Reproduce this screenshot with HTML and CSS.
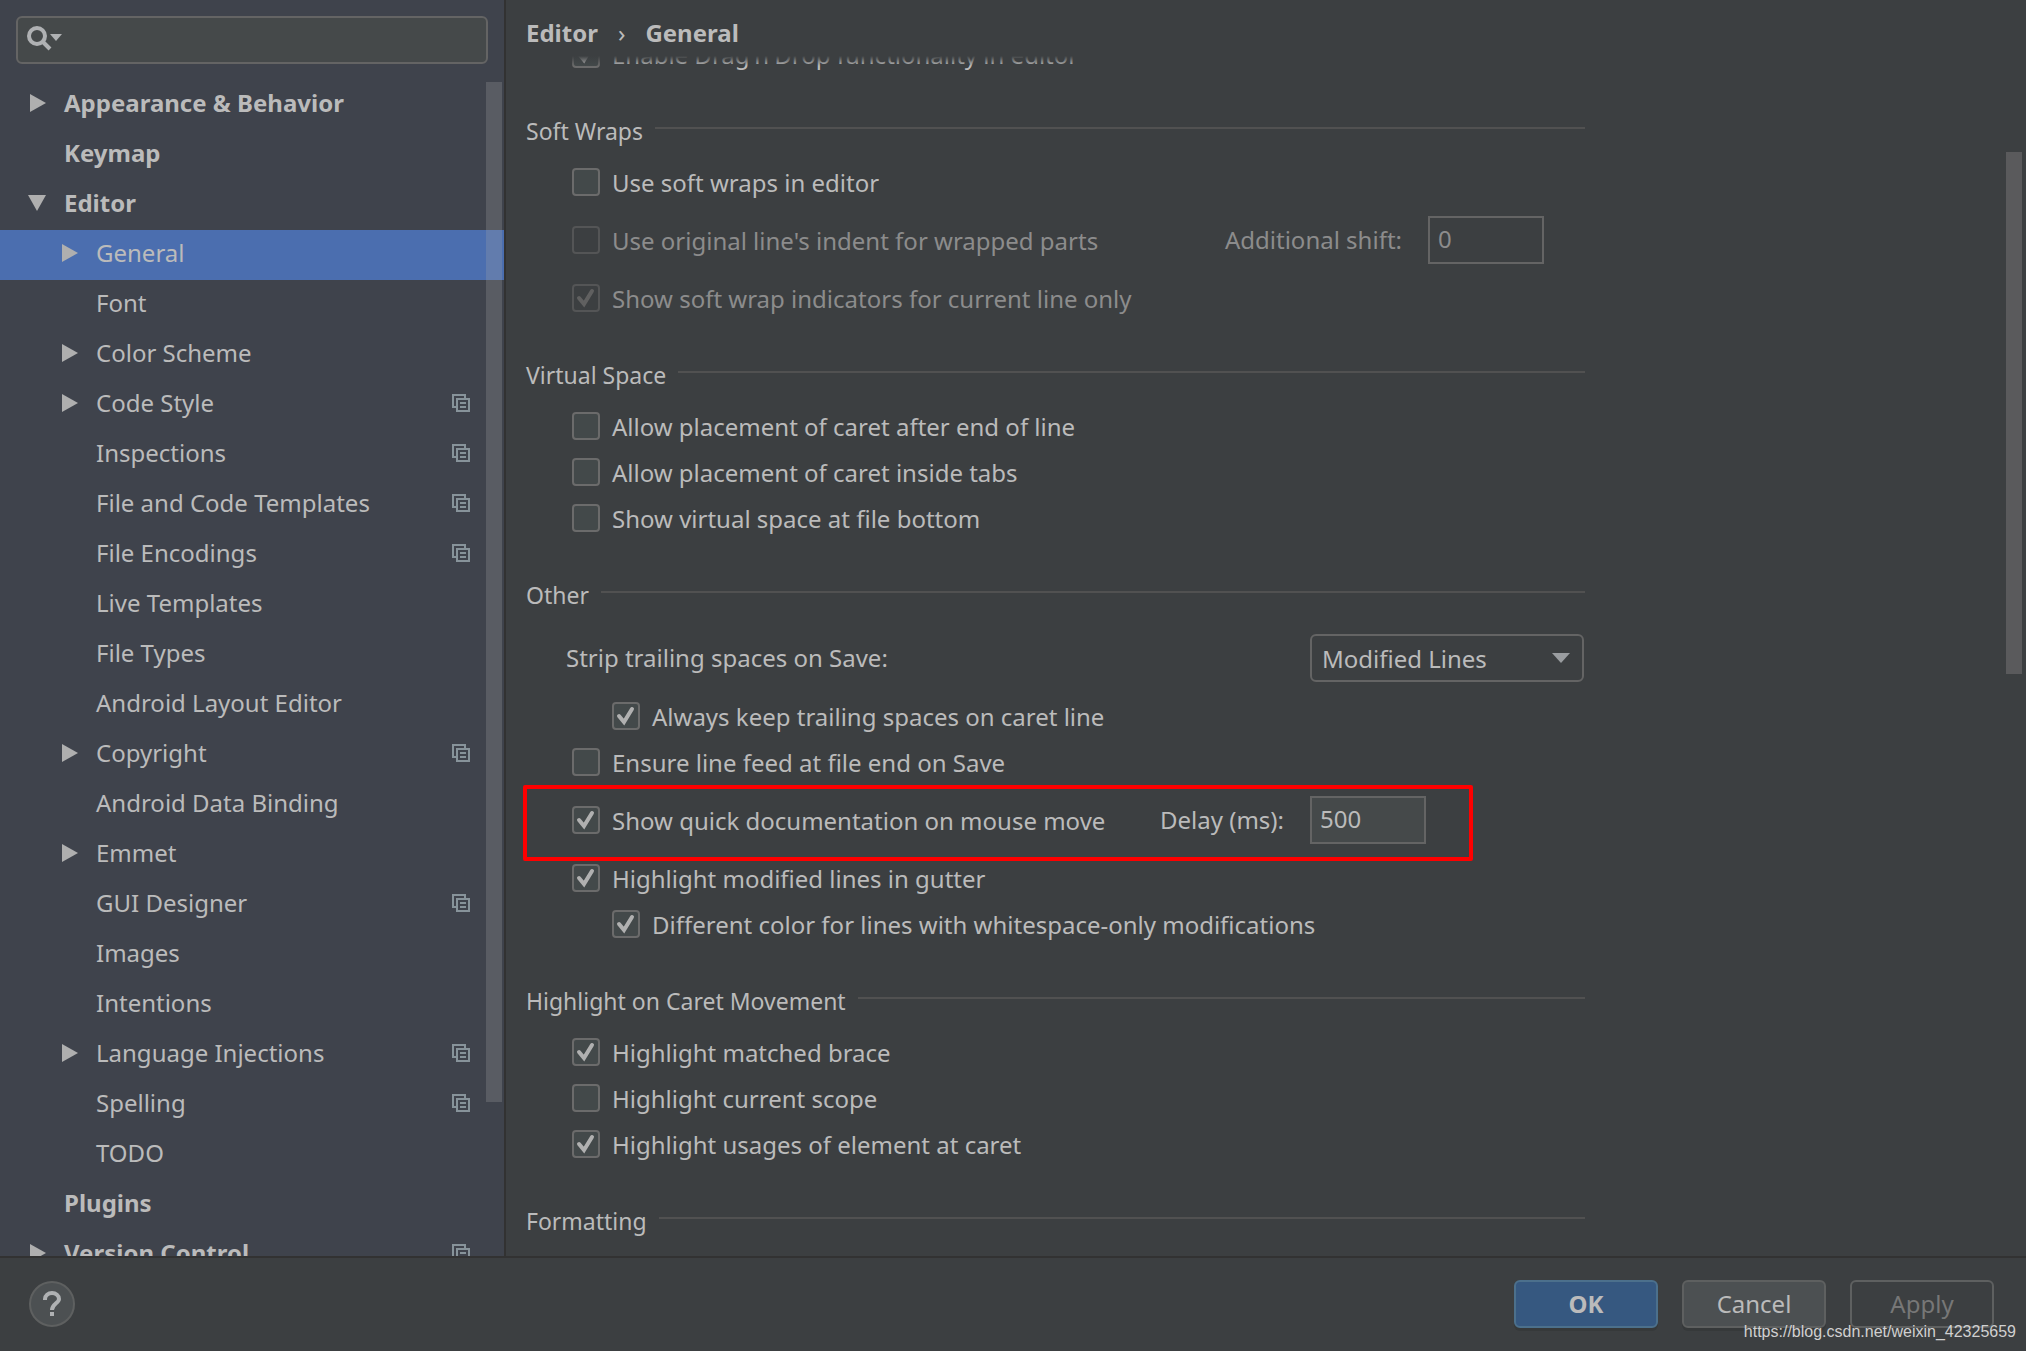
FILE: index.html
```
<!DOCTYPE html>
<html lang="en">

<head>
    <meta charset="UTF-8">
    <meta name="viewport" content="width=device-width, initial-scale=1.0">
    <title>Settings</title>
    <link rel="stylesheet" href="styles.css">
</head>

<body>
    <svg class="sprite" aria-hidden="true">
        <symbol id="right" viewBox="0 0 16 18">
            <path d="M0 0L16 9L0 18Z" fill="#afafaf" />
        </symbol>
        <symbol id="down" viewBox="0 0 18 16">
            <path d="M0 0H18L9 16Z" fill="#afafaf" />
        </symbol>
        <symbol id="copy" viewBox="0 0 18 18">
            <path d="M0 0H14V4H12V2H2V12H4V14H0Z" fill="#87939a" />
            <path d="M4 4H18V18H4ZM6 6V16H16V6Z" fill="#87939a" fill-rule="evenodd" />
            <path d="M8 8H14V10H8ZM8 12H14V14H8Z" fill="#87939a" />
        </symbol>
    </svg>
    <div class="window">
        <aside class="sidebar">
            <div class="search">
                <svg width="36" height="26" viewBox="0 0 36 26">
                    <circle cx="10" cy="10" r="8" fill="none" stroke="#afb1b3" stroke-width="4" />
                    <path d="M15 15L23 23" stroke="#afb1b3" stroke-width="4" />
                    <path d="M23 8H35L29 15Z" fill="#afb1b3" />
                </svg>
                <input type="text" aria-label="Search settings">
            </div>
            <nav class="tree">
                <ul>
                    <li class="top"><a href="#"><svg class="arrow"><use href="#right" /></svg>Appearance &amp; Behavior</a></li>
                    <li class="top"><a href="#"><span class="arrow"></span>Keymap</a></li>
                    <li class="top"><a href="#"><svg class="arrow open"><use href="#down" /></svg>Editor</a></li>
                    <li class="selected"><a href="#"><svg class="arrow"><use href="#right" /></svg>General</a></li>
                    <li><a href="#"><span class="arrow"></span>Font</a></li>
                    <li><a href="#"><svg class="arrow"><use href="#right" /></svg>Color Scheme</a></li>
                    <li><a href="#"><svg class="arrow"><use href="#right" /></svg>Code Style<svg class="copy"><use href="#copy" /></svg></a></li>
                    <li><a href="#"><span class="arrow"></span>Inspections<svg class="copy"><use href="#copy" /></svg></a></li>
                    <li><a href="#"><span class="arrow"></span>File and Code Templates<svg class="copy"><use href="#copy" /></svg></a></li>
                    <li><a href="#"><span class="arrow"></span>File Encodings<svg class="copy"><use href="#copy" /></svg></a></li>
                    <li><a href="#"><span class="arrow"></span>Live Templates</a></li>
                    <li><a href="#"><span class="arrow"></span>File Types</a></li>
                    <li><a href="#"><span class="arrow"></span>Android Layout Editor</a></li>
                    <li><a href="#"><svg class="arrow"><use href="#right" /></svg>Copyright<svg class="copy"><use href="#copy" /></svg></a></li>
                    <li><a href="#"><span class="arrow"></span>Android Data Binding</a></li>
                    <li><a href="#"><svg class="arrow"><use href="#right" /></svg>Emmet</a></li>
                    <li><a href="#"><span class="arrow"></span>GUI Designer<svg class="copy"><use href="#copy" /></svg></a></li>
                    <li><a href="#"><span class="arrow"></span>Images</a></li>
                    <li><a href="#"><span class="arrow"></span>Intentions</a></li>
                    <li><a href="#"><svg class="arrow"><use href="#right" /></svg>Language Injections<svg class="copy"><use href="#copy" /></svg></a></li>
                    <li><a href="#"><span class="arrow"></span>Spelling<svg class="copy"><use href="#copy" /></svg></a></li>
                    <li><a href="#"><span class="arrow"></span>TODO</a></li>
                    <li class="top"><a href="#"><span class="arrow"></span>Plugins</a></li>
                    <li class="top"><a href="#"><svg class="arrow"><use href="#right" /></svg>Version Control<svg class="copy"><use href="#copy" /></svg></a></li>
                </ul>
                <div class="thumb"></div>
            </nav>
        </aside>
        <main class="content">
            <h1><span>Editor</span><span class="sep">›</span><span>General</span></h1>
            <div class="scroll">
                <div class="options">
                    <div class="row"><label><input type="checkbox" checked>Enable Drag'n'Drop functionality in editor</label></div>

                    <h2>Soft Wraps</h2>
                    <div class="row"><label><input type="checkbox">Use soft wraps in editor</label></div>
                    <div class="row tall">
                        <label><input type="checkbox" disabled>Use original line's indent for wrapped parts</label>
                        <label class="field shift disabled" for="shift">Additional shift:</label>
                        <input type="text" id="shift" value="0" disabled>
                    </div>
                    <div class="row"><label><input type="checkbox" checked disabled>Show soft wrap indicators for current line only</label></div>

                    <h2>Virtual Space</h2>
                    <div class="row"><label><input type="checkbox">Allow placement of caret after end of line</label></div>
                    <div class="row"><label><input type="checkbox">Allow placement of caret inside tabs</label></div>
                    <div class="row"><label><input type="checkbox">Show virtual space at file bottom</label></div>

                    <h2>Other</h2>
                    <div class="row tall strip">
                        <label class="field" for="strip">Strip trailing spaces on Save:</label>
                        <select id="strip">
                            <option>None</option>
                            <option selected>Modified Lines</option>
                            <option>All</option>
                        </select>
                    </div>
                    <div class="row nested"><label><input type="checkbox" checked>Always keep trailing spaces on caret line</label></div>
                    <div class="row"><label><input type="checkbox">Ensure line feed at file end on Save</label></div>
                    <div class="row tall marked">
                        <label><input type="checkbox" checked>Show quick documentation on mouse move</label>
                        <label class="field delay" for="delay">Delay (ms):</label>
                        <input type="text" id="delay" value="500">
                    </div>
                    <div class="row"><label><input type="checkbox" checked>Highlight modified lines in gutter</label></div>
                    <div class="row nested"><label><input type="checkbox" checked>Different color for lines with whitespace-only modifications</label></div>

                    <h2>Highlight on Caret Movement</h2>
                    <div class="row"><label><input type="checkbox" checked>Highlight matched brace</label></div>
                    <div class="row"><label><input type="checkbox">Highlight current scope</label></div>
                    <div class="row"><label><input type="checkbox" checked>Highlight usages of element at caret</label></div>

                    <h2>Formatting</h2>
                </div>
            </div>
            <div class="thumb"></div>
        </main>
        <footer class="footer">
            <button class="help" aria-label="Help">
                <svg width="18" height="26" viewBox="0 0 18 26">
                    <path d="M2 9V8A7 6 0 0 1 16 8C16 12 9 13 9 19" fill="none" stroke="#afb1b3" stroke-width="4" />
                    <path d="M7 21H11V25H7Z" fill="#afb1b3" />
                </svg>
            </button>
            <button class="ok">OK</button>
            <button class="cancel">Cancel</button>
            <button class="apply" disabled>Apply</button>
        </footer>
        <div class="watermark">https://blog.csdn.net/weixin_42325659</div>
    </div>
</body>

</html>
```
FILE: styles.css
```
*,
*::before,
*::after {
    box-sizing: border-box;
}

body {
    margin: 0;
    background-color: #3c3f41;
    color: #bbbbbb;
    font-family: "Noto Sans", "Open Sans", sans-serif;
    font-size: 24px;
}

input,
select,
button {
    font: inherit;
    color: inherit;
}

.sprite {
    position: absolute;
    width: 0;
    height: 0;
}

.window {
    position: relative;
    height: 100vh;
    display: grid;
    grid-template-columns: 506px 1fr;
    grid-template-rows: minmax(0, 1fr) 95px;
}

.thumb {
    position: absolute;
    width: 16px;
    background-color: #5a5a5c;
}

/* left tree */
.sidebar {
    background-color: #3f434c;
    border-right: 2px solid #323232;
    display: flex;
    flex-direction: column;
    min-height: 0;
}

.search {
    display: flex;
    align-items: center;
    height: 48px;
    margin: 16px;
    padding: 0 0 2px 9px;
    background-color: #45494a;
    border: 2px solid #646464;
    border-radius: 6px;
}

.search svg {
    flex: none;
}

.search input {
    flex: 1;
    min-width: 0;
    background: none;
    border: none;
    outline: none;
}

.tree {
    position: relative;
    flex: 1;
    min-height: 0;
    overflow: hidden;
}

.tree ul {
    list-style: none;
    margin: 0;
    padding: 0;
}

.tree a {
    display: flex;
    align-items: center;
    height: 50px;
    padding: 0 34px 6px 62px;
    color: inherit;
    text-decoration: none;
}

.tree .top a {
    padding-left: 30px;
    font-weight: bold;
}

.tree .selected {
    background-color: #4b6eaf;
}

.arrow {
    width: 16px;
    height: 18px;
    margin: 2px 18px 0 0;
}

.arrow.open {
    width: 18px;
    height: 16px;
    margin-left: -2px;
}

.copy {
    width: 18px;
    height: 18px;
    margin: 2px 0 0 auto;
}

.tree .thumb {
    top: 2px;
    right: 2px;
    height: 1020px;
    background-color: rgba(166, 166, 166, 0.25);
}

/* right panel */
.content {
    position: relative;
    display: flex;
    flex-direction: column;
    min-height: 0;
}

.content > .thumb {
    top: 152px;
    right: 4px;
    height: 522px;
}

h1 {
    display: flex;
    gap: 20px;
    margin: 0;
    padding: 10px 20px 0;
    height: 56px;
    line-height: 46px;
    font-size: 24px;
}

.sep {
    font-weight: normal;
}

.scroll {
    position: relative;
    flex: 1;
    min-height: 0;
    overflow: hidden;
}

.scroll::before {
    content: "";
    position: absolute;
    top: 0;
    left: 0;
    right: 0;
    height: 10px;
    background: linear-gradient(#3c3f41, rgba(60, 63, 65, 0));
}

.options {
    width: 1059px;
    margin: -25px 0 0 20px;
}

h2 {
    display: flex;
    align-items: center;
    gap: 12px;
    margin: 36px 0 10px;
    line-height: 36px;
    font-size: 23px;
    font-weight: normal;
}

h2::after {
    content: "";
    flex: 1;
    height: 2px;
    margin-bottom: 6px;
    background-color: #515151;
}

.row {
    display: flex;
    align-items: center;
    height: 46px;
    padding-left: 46px;
}

.row.nested {
    padding-left: 86px;
}

.row.strip {
    justify-content: space-between;
    padding-left: 40px;
}

.row.tall {
    height: 70px;
}

.row label {
    display: flex;
    align-items: center;
    white-space: nowrap;
}

.row label:has(:disabled),
.row .disabled {
    color: #8c8c8c;
}

.row .field {
    margin-right: 26px;
    padding-bottom: 2px;
}

.row .shift,
.row .delay {
    margin-left: auto;
}

.row .shift + input {
    margin-right: 41px;
}

.row .delay + input {
    margin-right: 159px;
}

input[type="checkbox"] {
    appearance: none;
    width: 28px;
    height: 28px;
    margin: 0 12px 0 0;
    background: #43494a center no-repeat;
    border: 2px solid #6b6b6b;
    border-radius: 4px;
}

input[type="checkbox"]:checked {
    background-image: url("data:image/svg+xml,%3Csvg xmlns='http://www.w3.org/2000/svg' width='24' height='24'%3E%3Cpath d='M5 12L10 18L18 5' fill='none' stroke='%23b0b0b0' stroke-width='4' stroke-linecap='round'/%3E%3C/svg%3E");
}

input[type="checkbox"]:disabled {
    background-color: #3c3f41;
    border-color: #545556;
}

input[type="checkbox"]:disabled:checked {
    background-image: url("data:image/svg+xml,%3Csvg xmlns='http://www.w3.org/2000/svg' width='24' height='24'%3E%3Cpath d='M5 12L10 18L18 5' fill='none' stroke='%23606060' stroke-width='4' stroke-linecap='round'/%3E%3C/svg%3E");
}

.row input[type="text"] {
    width: 116px;
    height: 48px;
    padding: 0 8px 4px;
    background-color: #45494a;
    border: 2px solid #646464;
}

.row input[type="text"]:disabled {
    background-color: #3c3f41;
    color: #8c8c8c;
}

select {
    appearance: none;
    width: 274px;
    height: 48px;
    margin: 0 1px 0 0;
    padding: 0 10px;
    background: #3c3f41 right 12px center no-repeat url("data:image/svg+xml,%3Csvg xmlns='http://www.w3.org/2000/svg' width='18' height='10'%3E%3Cpath d='M0 0H18L9 10Z' fill='%239a9da0'/%3E%3C/svg%3E");
    border: 2px solid #646464;
    border-radius: 6px;
}

.marked {
    position: relative;
}

/* red frame over the quick documentation row */
.marked::after {
    content: "";
    position: absolute;
    top: 0;
    left: -3px;
    width: 950px;
    height: 76px;
    border: 4px solid #ff0000;
    border-radius: 2px;
    pointer-events: none;
}

/* bottom bar */
.footer {
    grid-column: 1 / 3;
    display: flex;
    align-items: center;
    gap: 24px;
    padding: 0 32px 2px 29px;
    border-top: 2px solid #323232;
}

.footer button {
    width: 144px;
    height: 48px;
    padding: 0;
    background-color: #4c5052;
    border: 2px solid #5e6060;
    border-radius: 6px;
    box-shadow: 0 3px 0 #36393a;
}

.footer .ok {
    background-color: #365880;
    border-color: #4c708c;
    font-weight: bold;
}

.footer .apply {
    background-color: #3c3f41;
    color: #777777;
    box-shadow: none;
}

.footer .help {
    display: flex;
    align-items: center;
    justify-content: center;
    width: 46px;
    height: 46px;
    margin-right: auto;
    border-radius: 50%;
    box-shadow: none;
}

.watermark {
    position: absolute;
    right: 10px;
    bottom: 10px;
    font-family: "Liberation Sans", Arial, sans-serif;
    font-size: 16px;
    color: #d0d0d0;
}
```
